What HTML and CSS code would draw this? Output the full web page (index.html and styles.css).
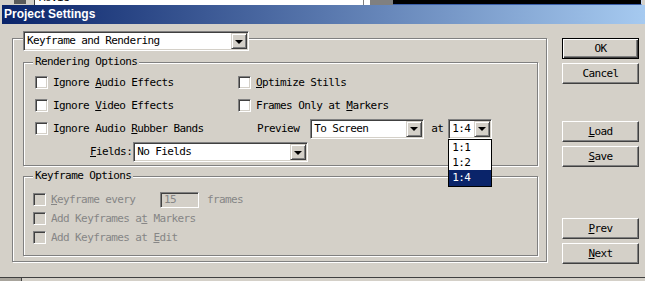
FILE: index.html
```html
<!DOCTYPE html>
<html>
<head lang="en">
    <meta charset="UTF-8">
    <title>Project Settings</title>
    <link rel="stylesheet" href="styles.css">
</head>
<body>
<div class="behind">
    <span class="bh-edge"></span>
    <span class="bh-icon"><i></i></span>
    <span class="bh-list"><span class="bh-name">Movie</span></span>
    <span class="bh-gap"></span>
    <span class="bh-gray"></span>
    <span class="bh-dark"></span>
</div>
<div class="win">
    <div class="caption">Project Settings</div>
    <div class="dlg">
        <div class="main">
            <div class="outer">
                <div class="combo combo-page">
                    <span class="combo-text">Keyframe and Rendering</span>
                    <span class="combo-btn"><i></i></span>
                </div>

                <div class="group group-render">
                    <span class="group-title">Rendering Options</span>
                    <div class="render-grid">
                        <label class="check"><span class="box"></span><span>Ignore <u>A</u>udio Effects</span></label>
                        <label class="check"><span class="box"></span><span><u>O</u>ptimize Stills</span></label>
                        <label class="check"><span class="box"></span><span>Ignore <u>V</u>ideo Effects</span></label>
                        <label class="check"><span class="box"></span><span>Frames Only at <u>M</u>arkers</span></label>
                        <label class="check"><span class="box"></span><span>Ignore Audio <u>R</u>ubber Bands</span></label>
                        <div class="preview-row">
                            <span class="preview-label">Preview</span>
                            <div class="combo combo-screen">
                                <span class="combo-text">To Screen</span>
                                <span class="combo-btn"><i></i></span>
                            </div>
                            <span class="at">at</span>
                            <div class="combo combo-zoom">
                                <span class="combo-text">1:4</span>
                                <span class="combo-btn"><i></i></span>
                                <ul class="droplist">
                                    <li>1:1</li>
                                    <li>1:2</li>
                                    <li class="sel">1:4</li>
                                </ul>
                            </div>
                        </div>
                        <div class="fields-row">
                            <span class="fields-label"><u>F</u>ields:</span>
                            <div class="combo combo-fields">
                                <span class="combo-text">No Fields</span>
                                <span class="combo-btn"><i></i></span>
                            </div>
                        </div>
                    </div>
                </div>

                <div class="group group-key">
                    <span class="group-title">Keyframe Options</span>
                    <div class="key-rows">
                        <div class="key-row">
                            <label class="check off key-every"><span class="box"></span><span><u>K</u>eyframe every</span></label>
                            <span class="num">15</span>
                            <span class="unit">frames</span>
                        </div>
                        <div class="key-row">
                            <label class="check off"><span class="box"></span><span>Add Keyframes a<u>t</u> Markers</span></label>
                        </div>
                        <div class="key-row">
                            <label class="check off"><span class="box"></span><span>Add Keyframes at <u>E</u>dit</span></label>
                        </div>
                    </div>
                </div>
            </div>
        </div>

        <div class="buttons">
            <div class="btn btn-default">OK</div>
            <div class="btn">Cancel</div>
            <div class="btn btn-load"><u>L</u>oad</div>
            <div class="btn"><u>S</u>ave</div>
            <div class="btn btn-prev"><u>P</u>rev</div>
            <div class="btn"><u>N</u>ext</div>
        </div>
    </div>
</div>
<div class="under">
    <span class="under-cell"></span>
</div>
</body>
</html>
```

FILE: styles.css
```css
* {
    margin: 0;
    padding: 0;
    box-sizing: border-box;
}

body {
    width: 645px;
    height: 281px;
    overflow: hidden;
    background: #d4d0c8;
    font-family: "DejaVu Sans Mono", "Liberation Mono", monospace;
    font-size: 11px;
    line-height: 12px;
    letter-spacing: -0.6px;
    color: #000;
}

u {
    text-decoration: underline;
    text-underline-offset: 1px;
}

/* window behind the dialog */
.behind {
    display: flex;
    height: 5px;
    overflow: hidden;
}

.bh-edge {
    width: 2px;
    background: #d4d0c8;
}

.bh-icon {
    width: 32px;
    background: #d4d0c8;
    padding-left: 12px;
}

.bh-icon i {
    display: block;
    width: 12px;
    height: 4px;
    background: #5a5a5a;
}

.bh-list {
    width: 329px;
    background: #fff;
    border-left: 1px solid #404040;
    overflow: hidden;
}

.bh-name {
    display: block;
    margin: -8px 0 0 4px;
    color: #000;
}

.bh-gap {
    width: 7px;
    background: #fff;
    border-left: 1px solid #808080;
}

.bh-gray {
    width: 23px;
    background: #808080;
}

.bh-dark {
    width: 249px;
    background: #000;
    border-bottom: 1px solid #3a5ea8;
    border-right: 1px solid #c8d8f0;
}

/* dialog */
.win {
    padding-left: 2px;
}

.caption {
    height: 19px;
    line-height: 19px;
    padding-left: 2px;
    background: linear-gradient(to right, #0a246a, #a6caf0);
    color: #fff;
    font-family: "Liberation Sans", Arial, sans-serif;
    font-weight: bold;
    font-size: 12px;
    letter-spacing: 0;
}

.dlg {
    display: flex;
    align-items: flex-start;
    height: 253px;
}

.main {
    padding: 14px 0 0 10px;
}

.outer {
    width: 535px;
    padding: 0 8px 5px 10px;
    border: 1px solid #808080;
    box-shadow: inset 1px 1px #fff, 1px 1px #fff;
}

/* combo box */
.combo {
    position: relative;
    display: flex;
    align-items: center;
    height: 20px;
    padding: 1px;
    background: #fff;
    border: 1px solid;
    border-color: #808080 #fff #fff #808080;
    box-shadow: inset 1px 1px #404040, inset -1px -1px #d4d0c8;
}

.combo-text {
    flex: 1;
    padding-left: 2px;
    white-space: nowrap;
    overflow: hidden;
}

.combo-btn {
    display: flex;
    align-items: center;
    justify-content: center;
    width: 16px;
    height: 16px;
    background: #d4d0c8;
    border: 1px solid;
    border-color: #d4d0c8 #404040 #404040 #d4d0c8;
    box-shadow: inset 1px 1px #fff, inset -1px -1px #808080;
}

.combo-btn i {
    display: block;
    width: 0;
    height: 0;
    margin-top: 1px;
    border-left: 4px solid transparent;
    border-right: 4px solid transparent;
    border-top: 4px solid #000;
}

.combo-page {
    width: 226px;
    margin-top: -8px;
}

.combo-screen {
    width: 114px;
    margin-left: 11px;
}

.combo-zoom {
    width: 44px;
    margin-left: 5px;
}

.combo-fields {
    width: 175px;
    margin-left: 1px;
}

.droplist {
    position: absolute;
    top: 19px;
    left: -1px;
    width: 44px;
    list-style: none;
    background: #fff;
    border: 1px solid #000;
    z-index: 2;
}

.droplist li {
    height: 15px;
    line-height: 15px;
    padding-left: 3px;
}

.droplist li.sel {
    height: 16px;
    background: #0a246a;
    color: #fff;
}

/* group boxes */
.group {
    border: 1px solid #808080;
    box-shadow: inset 1px 1px #fff, 1px 1px #fff;
}

.group-title {
    display: block;
    width: max-content;
    height: 12px;
    margin: -7px 0 0 9px;
    padding: 0 2px;
    background: #d4d0c8;
}

.group-render {
    margin-top: 11px;
    padding-bottom: 1px;
}

.render-grid {
    display: grid;
    grid-template-columns: 203px 1fr;
    grid-template-rows: 23px 23px 23px 24px;
    margin-top: 3px;
    padding-left: 11px;
}

.check {
    display: flex;
    align-items: center;
    gap: 5px;
    white-space: nowrap;
}

.box {
    width: 13px;
    height: 13px;
    flex: none;
    background: #fff;
    border: 1px solid;
    border-color: #808080 #fff #fff #808080;
    box-shadow: inset 1px 1px #404040, inset -1px -1px #d4d0c8;
}

.check.off {
    color: #868686;
}

.check.off .box {
    background: #d4d0c8;
}

.preview-row {
    display: flex;
    align-items: center;
    padding-left: 19px;
}

.at {
    margin-left: 7px;
}

.fields-row {
    grid-column: 1 / -1;
    display: flex;
    align-items: center;
    padding-left: 55px;
}

.group-key {
    margin-top: 10px;
    padding-bottom: 8px;
}

.key-rows {
    margin-top: 8px;
    padding-left: 9px;
}

.key-row {
    display: flex;
    align-items: center;
    height: 19px;
}

.key-every {
    width: 102px;
}

.num {
    width: 39px;
    height: 16px;
    margin-left: 25px;
    padding: 1px 0 0 3px;
    line-height: 12px;
    color: #868686;
    background: #d4d0c8;
    border: 1px solid;
    border-color: #808080 #fff #fff #808080;
    box-shadow: inset 1px 1px #404040, inset -1px -1px #d4d0c8;
}

.unit {
    margin-left: 8px;
    color: #868686;
}

/* push buttons */
.buttons {
    display: flex;
    flex-direction: column;
    gap: 4px;
    margin-left: 15px;
    padding-top: 14px;
}

.btn {
    width: 77px;
    height: 21px;
    line-height: 19px;
    text-align: center;
    background: #d4d0c8;
    border: 1px solid;
    border-color: #fff #404040 #404040 #fff;
    box-shadow: inset -1px -1px #808080;
}

.btn-default {
    border-color: #000;
    box-shadow: inset 1px 1px #fff, inset -1px -1px #404040, inset -2px -2px #808080;
}

.btn-load {
    margin-top: 33px;
}

.btn-prev {
    margin-top: 47px;
}

.under {
    display: flex;
    height: 4px;
    border-top: 1px solid #404040;
}

.under-cell {
    width: 22px;
    background: #a8a49c;
    border-right: 1px solid #404040;
}
```
